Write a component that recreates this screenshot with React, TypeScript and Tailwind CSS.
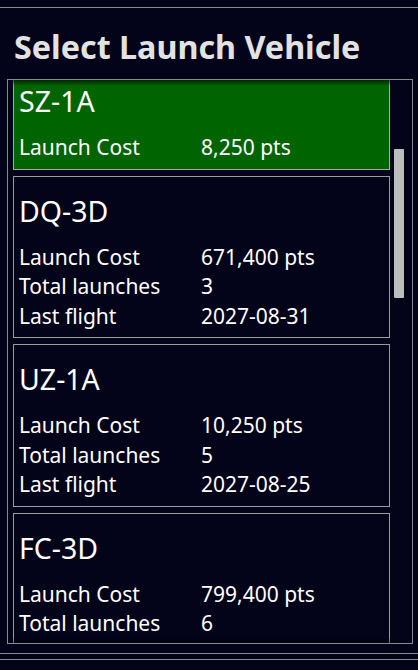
const vehicles = [
  { name: "SZ-1A", cost: "8,250 pts", selected: true },
  { name: "DQ-3D", cost: "671,400 pts", launches: "3", last: "2027-08-31" },
  { name: "UZ-1A", cost: "10,250 pts", launches: "5", last: "2027-08-25" },
  { name: "FC-3D", cost: "799,400 pts", launches: "6", last: "2027-08-19" },
];

type Vehicle = (typeof vehicles)[number];

function Row({ label, value }: { label: string; value: string }) {
  return (
    <div className="flex h-[29.5px] items-center text-[21px] leading-[29.5px]">
      <span className="w-[182px] shrink-0">{label}</span>
      <span>{value}</span>
    </div>
  );
}

function VehicleCard({ v }: { v: Vehicle }) {
  return (
    <div
      className={`shrink-0 border px-[5px] pt-[15px] pb-[6px] text-white ${
        v.selected ? "border-[#a8a8a8] bg-[#006400]" : "border-[#9c9c9c] bg-[#03031a]"
      }`}
    >
      <div className="mb-[13px] text-[28.5px] leading-[38px]">{v.name}</div>
      <Row label="Launch Cost" value={v.cost} />
      {v.launches && <Row label="Total launches" value={v.launches} />}
      {v.last && <Row label="Last flight" value={v.last} />}
    </div>
  );
}

export default function App() {
  return (
    <div className="h-[670px] w-full overflow-hidden bg-[#03031a] pt-[7px] font-['Noto_Sans',sans-serif]">
      <div className="border-t border-[#8a8a8a]">
        <h1 className="mt-[16px] px-[14px] text-[32.3px] leading-[44px] font-bold text-[#e2e2e2]">
          Select Launch Vehicle
        </h1>

        {/* vehicle list */}
        <div className="relative mt-[11px] ml-[7px] flex h-[565px] w-[406px] border border-[#8a8a8a]">
          <div className="h-full w-[382px] overflow-hidden pl-[5px]">
            <div className="-mt-[14px] flex flex-col gap-[6px]">
              {vehicles.map((v) => (
                <VehicleCard key={v.name} v={v} />
              ))}
            </div>
          </div>
          <div className="ml-[4px] w-[10px]">
            <div className="mt-[69px] h-[149px] rounded-[1px] bg-[#bdbdbd]" />
          </div>
          <div className="pointer-events-none absolute top-0 left-[5px] h-[6px] w-[377px] bg-gradient-to-b from-black/60 to-transparent" />
          <div className="pointer-events-none absolute bottom-0 left-[5px] h-[6px] w-[377px] bg-gradient-to-t from-black/40 to-transparent" />
        </div>

        <div className="mt-[9px] h-[7px] border-t border-b border-[#8a8a8a]" />
      </div>
    </div>
  );
}
